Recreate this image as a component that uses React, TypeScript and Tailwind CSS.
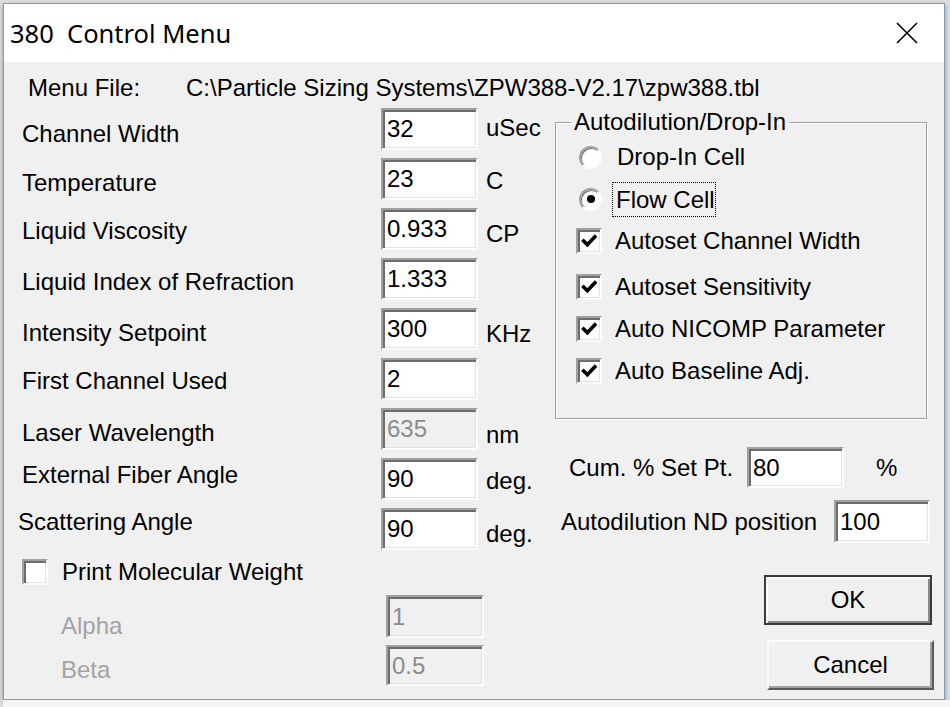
import React from "react";

const FONT = { fontFamily: '"Liberation Sans", Arial, sans-serif' };

function TextBox({ value, disabled, w, h }: { value: string; disabled?: boolean; w: string; h: string }) {
  return (
    <div
      className={`${w} ${h} shrink-0 border-2 border-t-[#a0a0a0] border-l-[#a0a0a0] border-r-[#fcfcfc] border-b-[#fcfcfc] shadow-[inset_2px_2px_0_#6d6d6d,inset_-1px_-1px_0_#e3e3e3] flex items-center pl-[4px] text-[24px] leading-[28px] ${
        disabled ? "bg-[#f0f0f0] text-[#8c8c8c]" : "bg-white text-black"
      }`}
    >
      {value}
    </div>
  );
}

function CheckBox({ checked }: { checked?: boolean }) {
  return (
    <div className="w-[26px] h-[26px] shrink-0 border-2 border-t-[#a0a0a0] border-l-[#a0a0a0] border-r-[#fcfcfc] border-b-[#fcfcfc] shadow-[inset_2px_2px_0_#6d6d6d,inset_-1px_-1px_0_#e3e3e3] bg-white flex items-center justify-center">
      {checked && (
        <svg width="17" height="17" viewBox="0 0 16 16">
          <path d="M2.5 7.5 L6 11 L13 3.5" fill="none" stroke="#000" strokeWidth="3.4" strokeLinecap="square" />
        </svg>
      )}
    </div>
  );
}

function Radio({ checked }: { checked?: boolean }) {
  return (
    <div className="w-[23px] h-[23px] shrink-0 rounded-full border-2 border-t-[#a0a0a0] border-l-[#a0a0a0] border-r-[#fcfcfc] border-b-[#fcfcfc] shadow-[inset_1px_1px_0_#6d6d6d] bg-white flex items-center justify-center">
      {checked && <div className="w-[8px] h-[8px] rounded-full bg-black" />}
    </div>
  );
}

const rows = [
  { label: "Channel Width", value: "32", unit: "uSec", lp: "pt-[12px] pl-[4px]", up: "pt-[6px]" },
  { label: "Temperature", value: "23", unit: "C", lp: "pt-[11px] pl-[4px]", up: "pt-[9px]" },
  { label: "Liquid Viscosity", value: "0.933", unit: "CP", lp: "pt-[9px] pl-[4px]", up: "pt-[12px]" },
  { label: "Liquid Index of Refraction", value: "1.333", unit: "", lp: "pt-[10px] pl-[4px]", up: "pt-[12px]" },
  { label: "Intensity Setpoint", value: "300", unit: "KHz", lp: "pt-[11px] pl-[4px]", up: "pt-[12px]" },
  { label: "First Channel Used", value: "2", unit: "", lp: "pt-[9px] pl-[4px]", up: "pt-[12px]" },
  { label: "Laser Wavelength", value: "635", unit: "nm", lp: "pt-[11px] pl-[4px]", up: "pt-[13px]", disabled: true },
  { label: "External Fiber Angle", value: "90", unit: "deg.", lp: "pt-[3px] pl-[4px]", up: "pt-[9px]" },
  { label: "Scattering Angle", value: "90", unit: "deg.", lp: "pt-0 pl-0", up: "pt-[12px]" },
];

export default function App() {
  return (
    <div className="w-[950px] h-[707px] bg-[#dcdcdc] pt-[3px] pl-[3px] overflow-hidden flex flex-col" style={FONT}>
      <div className="w-[942px] h-[697px] shrink-0 border border-[#7f9db9] flex flex-col shadow-[0_2px_4px_rgba(0,0,0,0.35)]">
        {/* Title bar */}
        <div className="h-[58px] bg-white flex items-center justify-between shrink-0">
          <div
            className="pl-[6px] text-[25.5px] text-black whitespace-pre"
            style={{ fontFamily: '"Noto Sans", "Open Sans", sans-serif' }}
          >
            {"380  Control Menu"}
          </div>
          <div className="w-[46px] h-[58px] mr-[14px] flex items-center justify-center">
            <svg width="22" height="22" viewBox="0 0 22 22">
              <path d="M1 1 L21 21 M21 1 L1 21" stroke="#000" strokeWidth="1.6" />
            </svg>
          </div>
        </div>

        {/* Body */}
        <div className="flex-1 bg-[#f0f0f0] pt-[12px] pl-[14px] text-[24px] leading-[28px] text-black">
          <div className="h-[34px] flex">
            <div className="w-[168px] pl-[10px]">Menu File:</div>
            <div>C:\Particle Sizing Systems\ZPW388-V2.17\zpw388.tbl</div>
          </div>

          <div className="flex">
            {/* Left column */}
            <div className="w-[537px] shrink-0 flex flex-col">
              {rows.map((r) => (
                <div key={r.label} className="h-[50px] flex">
                  <div className={`w-[363px] shrink-0 ${r.lp}`}>{r.label}</div>
                  <TextBox value={r.value} disabled={r.disabled} w="w-[97px]" h="h-[42px]" />
                  <div className={`ml-[8px] ${r.up}`}>{r.unit}</div>
                </div>
              ))}
              <div className="h-[28px] flex items-center pl-[4px] gap-[14px]">
                <CheckBox />
                <span>Print Molecular Weight</span>
              </div>
              <div className="flex mt-[9px]">
                <div className="w-[368px] shrink-0 pl-[43px] pt-[17px] text-[#a3a3a3]">Alpha</div>
                <TextBox value="1" disabled w="w-[98px]" h="h-[43px]" />
              </div>
              <div className="flex mt-[5px]">
                <div className="w-[368px] shrink-0 pl-[43px] pt-[11px] text-[#a3a3a3]">Beta</div>
                <TextBox value="0.5" disabled w="w-[98px]" h="h-[41px]" />
              </div>
            </div>

            {/* Right column */}
            <div className="flex flex-col">
              <fieldset className="w-[372px] border border-[#a0a0a0] shadow-[inset_1px_1px_0_#fff,1px_1px_0_#fff] pb-[26px] flex flex-col">
                <legend className="ml-[15px] px-[3px] leading-[28px]">Autodilution/Drop-In</legend>
                <div className="h-[42px] flex items-center pl-[23px] gap-[15px]">
                  <Radio />
                  <span>Drop-In Cell</span>
                </div>
                <div className="h-[42px] flex items-center pl-[23px] gap-[11px]">
                  <Radio checked />
                  <span className="outline outline-1 outline-dotted outline-black pl-[3px] pr-0 leading-[33px]">Flow Cell</span>
                </div>
                <div className="h-[42px] flex items-center pl-[20px] gap-[13px]">
                  <CheckBox checked />
                  <span>Autoset Channel Width</span>
                </div>
                <div className="h-[42px] mt-[4px] flex items-center pl-[20px] gap-[13px]">
                  <CheckBox checked />
                  <span>Autoset Sensitivity</span>
                </div>
                <div className="h-[42px] flex items-center pl-[20px] gap-[13px]">
                  <CheckBox checked />
                  <span>Auto NICOMP Parameter</span>
                </div>
                <div className="h-[42px] flex items-center pl-[20px] gap-[13px]">
                  <CheckBox checked />
                  <span>Auto Baseline Adj.</span>
                </div>
              </fieldset>

              <div className="flex items-center mt-[28px]">
                <div className="w-[178px] ml-[14px] shrink-0">Cum. % Set Pt.</div>
                <TextBox value="80" w="w-[97px]" h="h-[41px]" />
                <div className="ml-[32px]">%</div>
              </div>
              <div className="flex items-center mt-[12px]">
                <div className="w-[273px] ml-[6px] shrink-0">Autodilution ND position</div>
                <TextBox value="100" w="w-[96px]" h="h-[43px]" />
              </div>

              <button className="mt-[32px] ml-[209px] w-[168px] h-[50px] border-2 border-[#3c3c3c] bg-[#f0f0f0] shadow-[inset_2px_2px_0_#fff,inset_-2px_-2px_0_#8a8a8a] text-[24px] leading-[28px] text-black">
                OK
              </button>
              <button className="mt-[15px] ml-[212px] w-[167px] h-[50px] border-2 border-t-[#fcfcfc] border-l-[#fcfcfc] border-r-[#5a5a5a] border-b-[#5a5a5a] bg-[#f0f0f0] shadow-[inset_-2px_-2px_0_#a0a0a0] text-[24px] leading-[28px] text-black">
                Cancel
              </button>
            </div>
          </div>
        </div>
      </div>
      <div className="flex-1 bg-[#f4f4f4]" />
    </div>
  );
}
